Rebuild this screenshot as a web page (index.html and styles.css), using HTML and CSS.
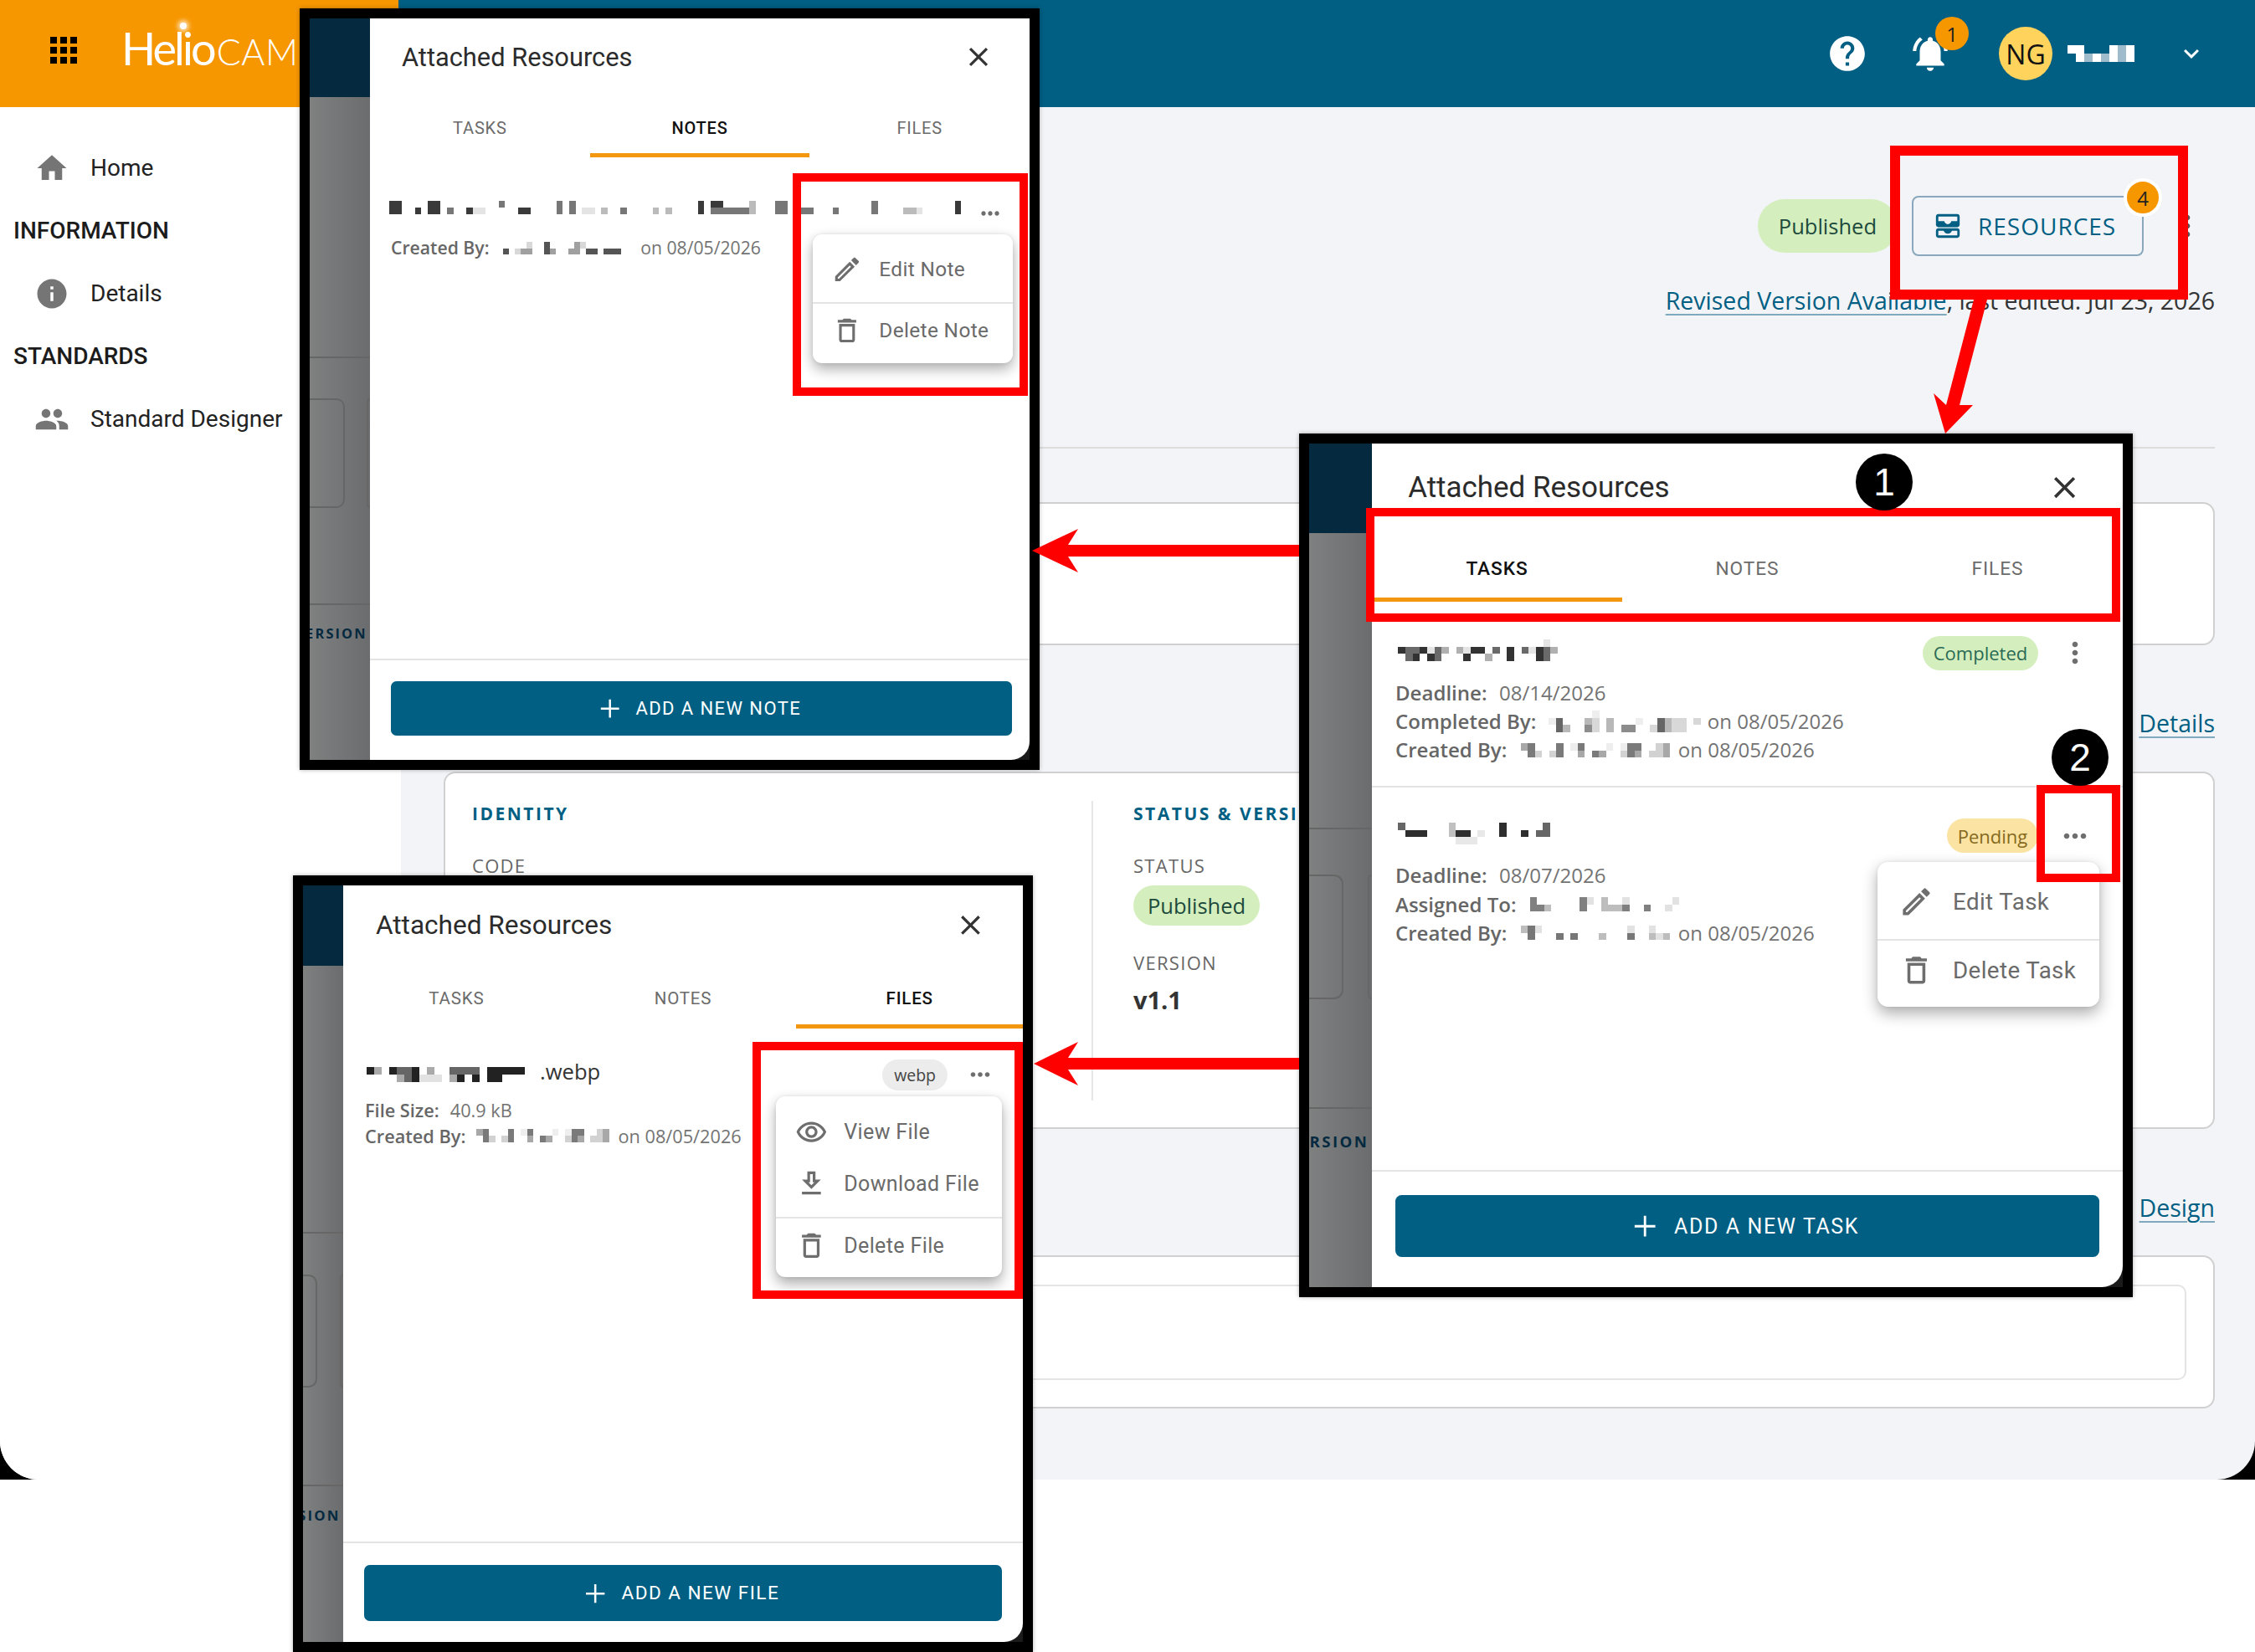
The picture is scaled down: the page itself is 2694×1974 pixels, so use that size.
FILE: index.html
```html
<!DOCTYPE html>
<html>
<head>
  <meta charset="UTF-8">
  <title>HelioCAM resources</title>
  <link rel="stylesheet" href="styles.css">
</head>
<body>

<!-- icons and mosaic blocks, used further down -->
<svg class="defs" width="0" height="0">
  <symbol id="i-apps" viewBox="0 0 24 24"><path d="M4 8h4V4H4v4zm6 12h4v-4h-4v4zm-6 0h4v-4H4v4zm0-6h4v-4H4v4zm6 0h4v-4h-4v4zm6-10v4h4V4h-4zm-6 4h4V4h-4v4zm6 6h4v-4h-4v4zm0 6h4v-4h-4v4z"/></symbol>
  <symbol id="i-home" viewBox="0 0 24 24"><path d="M10 20v-6h4v6h5v-8h3L12 3 2 12h3v8z"/></symbol>
  <symbol id="i-info" viewBox="0 0 24 24"><path d="M12 2C6.48 2 2 6.48 2 12s4.48 10 10 10 10-4.48 10-10S17.52 2 12 2zm1 15h-2v-6h2v6zm0-8h-2V7h2v2z"/></symbol>
  <symbol id="i-people" viewBox="0 0 24 24"><path d="M16 11c1.66 0 2.99-1.34 2.99-3S17.66 5 16 5c-1.66 0-3 1.34-3 3s1.34 3 3 3zm-8 0c1.66 0 2.99-1.34 2.99-3S9.66 5 8 5C6.34 5 5 6.34 5 8s1.34 3 3 3zm0 2c-2.33 0-7 1.17-7 3.5V19h14v-2.5c0-2.33-4.67-3.5-7-3.5zm8 0c-.29 0-.62.02-.97.05 1.16.84 1.97 1.97 1.97 3.45V19h6v-2.5c0-2.33-4.67-3.5-7-3.5z"/></symbol>
  <symbol id="i-help" viewBox="0 0 24 24"><path d="M12 2C6.48 2 2 6.48 2 12s4.48 10 10 10 10-4.48 10-10S17.52 2 12 2zm1 17h-2v-2h2v2zm2.07-7.75l-.9.92C13.45 12.9 13 13.5 13 15h-2v-.5c0-1.1.45-2.1 1.17-2.83l1.24-1.26c.37-.36.59-.86.59-1.41 0-1.1-.9-2-2-2s-2 .9-2 2H8c0-2.21 1.79-4 4-4s4 1.79 4 4c0 .88-.36 1.68-.93 2.25z"/></symbol>
  <symbol id="i-bell" viewBox="0 0 24 24"><path d="M7.58 4.08L6.15 2.65C3.75 4.48 2.17 7.3 2.03 10.5h2c.15-2.65 1.51-4.97 3.55-6.42zm12.39 6.42h2c-.15-3.2-1.73-6.02-4.12-7.85l-1.42 1.43c2.02 1.45 3.39 3.77 3.54 6.42zM18 11c0-3.07-1.64-5.64-4.5-6.32V4c0-.83-.67-1.5-1.5-1.5s-1.5.67-1.5 1.5v.68C7.63 5.36 6 7.92 6 11v5l-2 2v1h16v-1l-2-2v-5zm-6 11c.14 0 .27-.01.4-.04.65-.14 1.18-.58 1.44-1.18.1-.24.15-.5.15-.78h-4c.01 1.1.9 2 2.01 2z"/></symbol>
  <symbol id="i-chevron" viewBox="0 0 24 24"><path d="M16.59 8.59L12 13.17 7.41 8.59 6 10l6 6 6-6z"/></symbol>
  <symbol id="i-close" viewBox="0 0 24 24"><path d="M19 6.41L17.59 5 12 10.59 6.41 5 5 6.41 10.59 12 5 17.59 6.41 19 12 13.41 17.59 19 19 17.59 13.41 12z"/></symbol>
  <symbol id="i-edit" viewBox="0 0 24 24"><path d="M3 17.25V21h3.75L17.81 9.94l-3.75-3.75L3 17.25zM5.92 19H5v-.92l9.06-9.06.92.92L5.92 19zM20.71 5.63l-2.34-2.34c-.39-.39-1.02-.39-1.41 0l-1.83 1.83 3.75 3.75 1.83-1.83c.39-.39.39-1.02 0-1.41z"/></symbol>
  <symbol id="i-delete" viewBox="0 0 24 24"><path d="M6 19c0 1.1.9 2 2 2h8c1.1 0 2-.9 2-2V7H6v12zM8 9h8v10H8V9zm7.5-5l-1-1h-5l-1 1H5v2h14V4h-3.5z"/></symbol>
  <symbol id="i-eye" viewBox="0 0 24 24"><path d="M12 6c3.79 0 7.17 2.13 8.82 5.5C19.17 14.87 15.79 17 12 17s-7.17-2.13-8.82-5.5C4.83 8.13 8.21 6 12 6m0-2C7 4 2.73 7.11 1 11.5 2.73 15.89 7 19 12 19s9.27-3.11 11-7.5C21.27 7.11 17 4 12 4zm0 5c1.38 0 2.5 1.12 2.5 2.5S13.38 14 12 14s-2.5-1.12-2.5-2.5S10.62 9 12 9m0-2c-2.48 0-4.5 2.02-4.5 4.5S9.52 16 12 16s4.5-2.02 4.5-4.5S14.48 7 12 7z"/></symbol>
  <symbol id="i-download" viewBox="0 0 24 24"><path d="M19 9h-4V3H9v6H5l7 7 7-7zm-8 2V5h2v6h1.17L12 13.17 9.83 11H11zm-6 7h14v2H5z"/></symbol>
  <symbol id="i-dots" viewBox="0 0 24 24"><path d="M6 10c-1.1 0-2 .9-2 2s.9 2 2 2 2-.9 2-2-.9-2-2-2zm12 0c-1.1 0-2 .9-2 2s.9 2 2 2 2-.9 2-2-.9-2-2-2zm-6 0c-1.1 0-2 .9-2 2s.9 2 2 2 2-.9 2-2-.9-2-2-2z"/></symbol>
  <symbol id="i-kebab" viewBox="0 0 24 24"><path d="M12 8c1.1 0 2-.9 2-2s-.9-2-2-2-2 .9-2 2 .9 2 2 2zm0 2c-1.1 0-2 .9-2 2s.9 2 2 2 2-.9 2-2-.9-2-2-2zm0 6c-1.1 0-2 .9-2 2s.9 2 2 2 2-.9 2-2-.9-2-2-2z"/></symbol>
  <symbol id="i-add" viewBox="0 0 24 24"><path d="M19 12.8h-6.2V19h-1.6v-6.200H5v-1.600h6.200V5h1.600v6.200H19z"/></symbol>
  <symbol id="i-inbox" viewBox="0 0 24 24"><path fill-rule="evenodd" d="M4 2h16c1.100 0 2 .9 2 2v7c0 1.100-.9 2-2 2H4c-1.100 0-2-.9-2-2V4c0-1.100.9-2 2-2zm0 2v4h5c.4 1.500 1.500 2.500 3 2.500s2.600-1 3-2.500h5V4H4zM4 14h16c1.100 0 2 .9 2 2v4c0 1.100-.9 2-2 2H4c-1.100 0-2-.9-2-2v-4c0-1.100.9-2 2-2zm0 2v4h16v-4h-4.500c-.4 1.300-1.900 2.500-3.500 2.500S8.900 17.300 8.500 16H4z"/></symbol>

  <!-- mosaic blocks over the names, 1 unit = 1 cell -->
  <symbol id="m-task1" viewBox="0 0 22 3">
    <path fill="#333" d="M0 1h1v1H0zM3 1h1v1H3zM10 1h2v1h-2zM15 1h1v2h-1zM19 1h1v2h-1zM2 2h1v1H2zM4 2h1v1H4zM9 2h1v1H9z"/>
    <path fill="#6a6a6a" d="M1 1h2v1H1zM5 1h1v2H5zM13 1h1v1h-1zM17 1h1v1h-1zM20 1h1v2h-1zM1 2h1v1H1z"/>
    <path fill="#b0b0b0" d="M6 1h1v1H6zM8 1h1v1H8zM12 2h1v1h-1zM21 1h1v1h-1z"/>
    <path fill="#e4e4e4" d="M4 1h1v1H4zM9 1h1v1H9zM18 1h1v1h-1zM20 0h1v1h-1z"/>
  </symbol>
  <symbol id="m-completed" viewBox="0 0 21 3">
    <path fill="#666" d="M1 1h1v2H1zM15 1h1v2h-1z"/>
    <path fill="#8c8c8c" d="M5 2h1v1H5zM10 2h2v1h-2z"/>
    <path fill="#b8b8b8" d="M5 1h1v1H5zM2 2h1v1H2zM8 1h1v2H8zM16 1h1v2h-1z"/>
    <path fill="#d8d8d8" d="M6 1h1v2H6zM14 2h1v1h-1zM17 1h2v2h-2zM20 1h1v1h-1z"/>
    <path fill="#eee" d="M0 1h1v1H0zM12 1h1v1h-1zM6 0h1v1H6z"/>
  </symbol>
  <symbol id="m-created" viewBox="0 0 21 2">
    <path fill="#7a7a7a" d="M1 0h1v2H1zM5 0h1v2H5zM8 0h1v1H8zM10 1h1v1h-1zM15 0h2v1h-2zM15 1h1v1h-1z"/>
    <path fill="#a8a8a8" d="M8 1h1v1H8zM0 0h1v1H0zM11 1h1v1h-1zM16 1h1v1h-1zM20 0h1v2h-1z"/>
    <path fill="#d2d2d2" d="M2 1h1v1H2zM4 1h1v1H4zM14 1h1v1h-1zM18 1h2v1h-2zM19 0h1v1h-1z"/>
    <path fill="#eee" d="M7 0h1v1H7zM14 0h1v1h-1zM12 0h1v1h-1z"/>
  </symbol>
  <symbol id="m-task2" viewBox="0 0 21 3">
    <path fill="#2e2e2e" d="M1 1h3v1H1zM8 1h2v1H8zM14 0h1v2h-1zM17 1h1v1h-1z"/>
    <path fill="#666" d="M0 0h1v1H0zM20 0h1v2h-1zM19 1h1v1h-1z"/>
    <path fill="#c0c0c0" d="M7 0h1v1H7zM7 1h1v1H7z"/>
    <path fill="#e8e8e8" d="M10 2h1v1h-1zM8 2h2v1H8zM11 1h1v1h-1z"/>
  </symbol>
  <symbol id="m-assigned" viewBox="0 0 21 2">
    <path fill="#808080" d="M0 0h1v2H0zM1 1h2v1H1zM7 0h1v2H7zM13 1h1v1h-1zM16 1h1v1h-1z"/>
    <path fill="#bdbdbd" d="M2 1h1v1H2zM10 0h1v2h-1zM11 1h2v1h-2z"/>
    <path fill="#e2e2e2" d="M8 0h1v1H8zM20 0h1v1h-1zM19 1h1v1h-1zM13 0h1v1h-1z"/>
  </symbol>
  <symbol id="m-created2" viewBox="0 0 21 2">
    <path fill="#777" d="M1 0h1v2H1zM5 1h1v1H5zM7 1h1v1H7zM15 1h1v1h-1z"/>
    <path fill="#bdbdbd" d="M0 0h1v1H0zM11 1h1v1h-1zM18 1h1v1h-1zM20 1h1v1h-1z"/>
    <path fill="#e2e2e2" d="M2 0h1v1H2zM15 0h1v1h-1zM19 1h1v1h-1zM18 0h1v1h-1z"/>
  </symbol>
  <symbol id="m-note" viewBox="0 0 90 3">
    <path fill="#3a3a3a" d="M0 0h2v2H0zM4 1h1v1H4zM6 0h2v2H6zM12 1h1v1h-1zM20 1h2v1h-2zM48 0h1v2h-1zM50 0h2v1h-2zM88 0h1v2h-1z"/>
    <path fill="#777" d="M9 1h1v1H9zM17 0h1v1h-1zM26 0h1v2h-1zM28 0h1v2h-1zM36 1h1v1h-1zM50 1h3v1h-3zM53 1h3v1h-3zM60 0h2v2h-2zM64 1h2v1h-2zM69 1h1v1h-1zM75 0h1v2h-1z"/>
    <path fill="#bbb" d="M33 1h1v1h-1zM41 1h1v1h-1zM43 1h1v1h-1zM56 0h1v2h-1zM80 1h2v1h-2z"/>
    <path fill="#e4e4e4" d="M13 1h2v1h-2zM30 1h2v1h-2zM82 1h1v1h-1z"/>
  </symbol>
  <symbol id="m-note-by" viewBox="0 0 21 2">
    <path fill="#555" d="M0 1h1v1H0zM7 0h1v2H7zM14 1h2v1h-2zM17 1h3v1h-3z"/>
    <path fill="#a0a0a0" d="M3 1h2v1H3zM8 1h1v1H8zM11 1h2v1h-2zM12 0h1v1h-1z"/>
    <path fill="#d8d8d8" d="M4 0h1v1H4zM2 1h1v1H2zM13 0h1v1h-1z"/>
  </symbol>
  <symbol id="m-file" viewBox="0 0 23 2">
    <path fill="#222" d="M0 0h1v1H0zM3 0h1v1H3zM6 0h1v2H6zM12 1h1v1h-1zM14 1h1v1h-1zM16 0h5v1h-5zM16 1h2v1h-2z"/>
    <path fill="#666" d="M4 0h2v1H4zM5 1h1v1H5zM11 0h2v1h-2zM13 0h2v1h-2z"/>
    <path fill="#aaa" d="M1 0h1v1H1zM4 1h1v1H4zM8 0h1v1H8zM11 1h1v1h-1z"/>
    <path fill="#e2e2e2" d="M7 1h2v1H7zM9 1h1v1H9z"/>
  </symbol>
  <symbol id="m-user" viewBox="0 0 8 2">
    <path fill="#fff" d="M0 0h2v1H0zM1 1h1v1H1zM3 1h1v1H3zM5 0h1v2H5zM7 0h1v2H7z"/>
    <path fill="#9fbccd" d="M2 1h1v1H2zM6 1h1v1H6zM4 1h1v1H4zM6 0h1v1H6z"/>
  </symbol>
</svg>

<div class="screen">
  <div class="app">
    <header class="topbar">
      <div class="brand">
        <svg class="ico brand-apps"><use href="#i-apps"/></svg>
        <span class="logo"><span class="logo-main">Helio</span><span class="logo-sub">CAM</span></span>
      </div>
      <div class="top-right">
        <svg class="ico top-help"><use href="#i-help"/></svg>
        <div class="top-bell">
          <svg class="ico top-bell-ico"><use href="#i-bell"/></svg>
          <span class="bell-count">1</span>
        </div>
        <span class="avatar">NG</span>
        <svg class="top-user"><use href="#m-user"/></svg>
        <svg class="ico top-chevron"><use href="#i-chevron"/></svg>
      </div>
    </header>

    <div class="content">
      <nav class="sidebar">
        <a class="nav-item"><svg class="ico nav-ico"><use href="#i-home"/></svg>Home</a>
        <div class="nav-head">INFORMATION</div>
        <a class="nav-item"><svg class="ico nav-ico"><use href="#i-info"/></svg>Details</a>
        <div class="nav-head">STANDARDS</div>
        <a class="nav-item"><svg class="ico nav-ico"><use href="#i-people"/></svg>Standard Designer</a>
      </nav>

      <main class="main">
        <div class="actions">
          <span class="status-pill">Published</span>
          <button class="res-btn">
            <svg class="ico res-ico"><use href="#i-inbox"/></svg>RESOURCES
            <span class="res-count">4</span>
          </button>
          <svg class="ico act-kebab"><use href="#i-kebab"/></svg>
        </div>
        <div class="edited"><a class="link">Revised Version Available</a>, last edited: Jul 23, 2026</div>
        <hr class="rule">

        <section class="card card-a"></section>
        <div class="card-link"><a class="link">Details</a></div>

        <section class="card card-b">
          <div class="col col-id">
            <h3 class="sec-title">IDENTITY</h3>
            <div class="field">CODE</div>
          </div>
          <div class="col col-status">
            <h3 class="sec-title">STATUS &amp; VERSION</h3>
            <div class="field">STATUS</div>
            <span class="status-pill status-small">Published</span>
            <div class="field field-gap">VERSION</div>
            <div class="field-val">v1.1</div>
          </div>
        </section>
        <div class="card-link card-link-b"><a class="link">Design</a></div>

        <section class="card card-c"><div class="inner-box"></div></section>
      </main>
    </div>
  </div>
</div>

<!-- screenshot of the notes tab -->
<div class="panel panel-notes">
  <div class="strip">
    <div class="strip-top"></div>
    <div class="strip-line"></div>
    <div class="strip-boxes"><i></i><i></i></div>
    <div class="strip-line strip-line-b"></div>
    <div class="strip-text">VERSION</div>
  </div>
  <div class="drawer">
    <div class="dr-head">
      <h2 class="dr-title">Attached Resources</h2>
      <svg class="ico dr-close"><use href="#i-close"/></svg>
    </div>
    <div class="tabs">
      <span class="tab">TASKS</span>
      <span class="tab tab-on">NOTES</span>
      <span class="tab">FILES</span>
    </div>
    <div class="list note-item">
      <div class="note-line">
        <svg class="m-note"><use href="#m-note"/></svg>
        <svg class="ico note-dots"><use href="#i-dots"/></svg>
      </div>
      <div class="meta note-by"><span class="lbl">Created By:</span><svg class="m-name-n"><use href="#m-note-by"/></svg><span>on 08/05/2026</span></div>
    </div>
    <div class="menu menu-notes">
      <div class="menu-group">
        <div class="menu-row"><svg class="ico menu-ico"><use href="#i-edit"/></svg>Edit Note</div>
      </div>
      <div class="menu-group menu-last">
        <div class="menu-row"><svg class="ico menu-ico"><use href="#i-delete"/></svg>Delete Note</div>
      </div>
    </div>
    <div class="dr-foot">
      <button class="add-btn"><svg class="ico add-ico"><use href="#i-add"/></svg>ADD A NEW NOTE</button>
    </div>
  </div>
</div>

<!-- screenshot of the tasks tab -->
<div class="panel panel-tasks">
  <div class="strip">
    <div class="strip-top"></div>
    <div class="strip-line"></div>
    <div class="strip-boxes"><i></i><i></i></div>
    <div class="strip-line strip-line-b"></div>
    <div class="strip-text">VERSION</div>
  </div>
  <div class="drawer">
    <div class="dr-head">
      <h2 class="dr-title">Attached Resources</h2>
      <svg class="ico dr-close"><use href="#i-close"/></svg>
    </div>
    <div class="tabs">
      <span class="tab tab-on">TASKS</span>
      <span class="tab">NOTES</span>
      <span class="tab">FILES</span>
    </div>
    <div class="list">
      <div class="task task-first">
        <div class="task-head">
          <svg class="m-task"><use href="#m-task1"/></svg>
          <span class="tag tag-done">Completed</span>
          <svg class="ico task-more"><use href="#i-kebab"/></svg>
        </div>
        <div class="meta"><span class="lbl">Deadline:</span><span>08/14/2026</span></div>
        <div class="meta"><span class="lbl">Completed By:</span><svg class="m-name"><use href="#m-completed"/></svg><span>on 08/05/2026</span></div>
        <div class="meta"><span class="lbl">Created By:</span><svg class="m-name m-name-2"><use href="#m-created"/></svg><span>on 08/05/2026</span></div>
      </div>
      <div class="task">
        <div class="task-head">
          <svg class="m-task m-task-b"><use href="#m-task2"/></svg>
          <span class="tag tag-pending">Pending</span>
          <svg class="ico task-more"><use href="#i-dots"/></svg>
        </div>
        <div class="meta"><span class="lbl">Deadline:</span><span>08/07/2026</span></div>
        <div class="meta"><span class="lbl">Assigned To:</span><svg class="m-name m-name-2"><use href="#m-assigned"/></svg></div>
        <div class="meta"><span class="lbl">Created By:</span><svg class="m-name m-name-2"><use href="#m-created2"/></svg><span>on 08/05/2026</span></div>
      </div>
    </div>
    <div class="menu menu-tasks">
      <div class="menu-group">
        <div class="menu-row"><svg class="ico menu-ico"><use href="#i-edit"/></svg>Edit Task</div>
      </div>
      <div class="menu-group menu-last">
        <div class="menu-row"><svg class="ico menu-ico"><use href="#i-delete"/></svg>Delete Task</div>
      </div>
    </div>
    <div class="dr-foot">
      <button class="add-btn"><svg class="ico add-ico"><use href="#i-add"/></svg>ADD A NEW TASK</button>
    </div>
  </div>
</div>

<!-- screenshot of the files tab -->
<div class="panel panel-files">
  <div class="strip">
    <div class="strip-top"></div>
    <div class="strip-line"></div>
    <div class="strip-boxes"><i></i><i></i></div>
    <div class="strip-line strip-line-b"></div>
    <div class="strip-text">VERSION</div>
  </div>
  <div class="drawer">
    <div class="dr-head">
      <h2 class="dr-title">Attached Resources</h2>
      <svg class="ico dr-close"><use href="#i-close"/></svg>
    </div>
    <div class="tabs">
      <span class="tab">TASKS</span>
      <span class="tab">NOTES</span>
      <span class="tab tab-on">FILES</span>
    </div>
    <div class="list file-item">
      <div class="file-head">
        <svg class="m-file"><use href="#m-file"/></svg><span class="file-ext">.webp</span>
        <span class="tag tag-type">webp</span>
        <svg class="ico task-more"><use href="#i-dots"/></svg>
      </div>
      <div class="meta"><span class="lbl">File Size:</span><span>40.9 kB</span></div>
      <div class="meta"><span class="lbl">Created By:</span><svg class="m-name-f"><use href="#m-created"/></svg><span>on 08/05/2026</span></div>
    </div>
    <div class="menu menu-files">
      <div class="menu-group">
        <div class="menu-row"><svg class="ico menu-ico"><use href="#i-eye"/></svg>View File</div>
        <div class="menu-row"><svg class="ico menu-ico"><use href="#i-download"/></svg>Download File</div>
      </div>
      <div class="menu-group menu-last">
        <div class="menu-row"><svg class="ico menu-ico"><use href="#i-delete"/></svg>Delete File</div>
      </div>
    </div>
    <div class="dr-foot">
      <button class="add-btn"><svg class="ico add-ico"><use href="#i-add"/></svg>ADD A NEW FILE</button>
    </div>
  </div>
</div>

<!-- red callouts drawn over everything -->
<svg class="arrows" width="2694" height="1974" viewBox="0 0 2694 1974">
  <polygon points="2358,358 2374,358 2341,484 2357,484 2324,518 2310,470 2325,484"/>
  <polygon points="1552,651 1276,651 1288,632 1233,658 1288,684 1276,665 1552,665"/>
  <polygon points="1552,1264 1276,1264 1288,1245 1235,1271 1288,1297 1276,1278 1552,1278"/>
</svg>
<div class="mark mark-res"></div>
<div class="mark mark-note"></div>
<div class="mark mark-tabs"></div>
<div class="mark mark-dots"></div>
<div class="mark mark-file"></div>
<div class="step step-1">1</div>
<div class="step step-2">2</div>

</body>
</html>
```

FILE: styles.css
```css
* {
  box-sizing: border-box;
}

body {
  margin: 0;
  width: 2694px;
  height: 1974px;
  position: relative;
  overflow: hidden;
  background: #fff;
  color: #333;
  font-family: "Open Sans", sans-serif;
}

h2, h3 {
  margin: 0;
  font-weight: inherit;
}

.defs {
  position: absolute;
}

.ico {
  display: block;
  flex: none;
  fill: currentColor;
}

/* base page */
.screen {
  height: 1768px;
  background: #000;
}

.app {
  height: 100%;
  display: flex;
  flex-direction: column;
  overflow: hidden;
  border-radius: 0 0 46px 46px;
  background: #f2f4f7;
}

.topbar {
  height: 128px;
  flex: none;
  display: flex;
  justify-content: space-between;
  background: #005f83;
}

.brand {
  width: 476px;
  display: flex;
  align-items: center;
  background: #f79700;
  padding: 0 0 8px 52px;
}

.brand-apps {
  width: 48px;
  height: 48px;
  color: #000;
}

.logo {
  margin: -6px 0 0 45px;
  color: #fff;
  font-family: Lato, sans-serif;
  white-space: nowrap;
  display: flex;
  align-items: baseline;
}

.logo-main {
  position: relative;
  font-size: 54px;
  letter-spacing: -2.9px;
}

/* little sun on the i */
.logo-main::after {
  content: "";
  position: absolute;
  left: 70px;
  top: 2px;
  width: 8px;
  height: 8px;
  border-radius: 50%;
  background: #fff;
  box-shadow: 0 0 5px 3px rgba(255, 255, 255, .65);
}

.logo-sub {
  font-size: 43px;
  font-weight: 300;
  letter-spacing: .5px;
  margin-left: 3px;
}

.top-right {
  display: flex;
  align-items: center;
  padding-right: 58px;
  color: #fff;
}

.top-help {
  width: 50px;
  height: 50px;
}

.top-bell {
  position: relative;
  margin-left: 49px;
}

.top-bell-ico {
  width: 50px;
  height: 50px;
}

.bell-count {
  position: absolute;
  left: 31px;
  top: -19px;
  width: 40px;
  height: 40px;
  border-radius: 50%;
  background: #f79700;
  color: #222;
  font-size: 24px;
  display: flex;
  align-items: center;
  justify-content: center;
}

.avatar {
  margin-left: 57px;
  width: 64px;
  height: 64px;
  border-radius: 50%;
  background: #ffd35c;
  color: #111;
  font-size: 32px;
  display: flex;
  align-items: center;
  justify-content: center;
}

.top-user {
  margin-left: 18px;
  width: 80px;
  height: 20px;
}

.top-chevron {
  margin-left: 50px;
  width: 36px;
  height: 36px;
}

.content {
  flex: 1;
  display: flex;
  min-height: 0;
}

.sidebar {
  width: 479px;
  flex: none;
  background: #fff;
  padding-top: 35px;
  font-family: Roboto, sans-serif;
  font-size: 28px;
  color: #222;
}

.nav-item {
  height: 75px;
  display: flex;
  align-items: center;
  padding-left: 41px;
}

.nav-ico {
  width: 42px;
  height: 42px;
  margin-right: 25px;
  color: #757575;
}

.nav-head {
  height: 75px;
  display: flex;
  align-items: center;
  padding-left: 16px;
  font-weight: 500;
  color: #1c1c1c;
}

.main {
  flex: 1;
  padding: 106px 48px 0 51px;
  font-size: 28.5px;
}

.actions {
  display: flex;
  justify-content: flex-end;
  align-items: center;
}

.status-pill {
  height: 64px;
  padding: 0 25px;
  display: flex;
  align-items: center;
  border-radius: 32px;
  background: #d4efbd;
  color: #1d4a3c;
  font-size: 25.5px;
}

.res-btn {
  position: relative;
  margin-left: 17px;
  width: 277px;
  height: 72px;
  padding: 0 0 0 24px;
  display: flex;
  align-items: center;
  background: transparent;
  border: 2px solid #8aa8bd;
  border-radius: 8px;
  color: #005f83;
  font-family: "Open Sans", sans-serif;
  font-size: 28px;
  letter-spacing: 1px;
}

.res-ico {
  width: 34px;
  height: 34px;
  margin-right: 19px;
}

.res-count {
  position: absolute;
  right: -24px;
  top: -23px;
  width: 46px;
  height: 46px;
  border: 4px solid #fff;
  border-radius: 50%;
  background: #f79700;
  color: #222;
  font-size: 24px;
  letter-spacing: 0;
  display: flex;
  align-items: center;
  justify-content: center;
}

.act-kebab {
  margin-left: 32px;
  margin-right: 13px;
  width: 40px;
  height: 40px;
  color: #555;
}

.edited {
  margin-top: 36px;
  line-height: 34px;
  text-align: right;
}

.link {
  color: #005f83;
  text-decoration: underline;
  text-underline-offset: 5px;
  text-decoration-thickness: 2px;
  text-decoration-color: #7fa9bf;
}

.rule {
  margin: 158px 0 0;
  border: 0;
  border-top: 2px solid #dcdcdc;
}

.card {
  border: 2px solid #d0d0d0;
  border-radius: 14px;
  background: #fff;
}

.card-a {
  margin-top: 64px;
  height: 171px;
}

.card-link {
  margin-top: 75px;
  line-height: 36px;
  text-align: right;
}

.card-link-b {
  margin-top: 76px;
}

.card-b {
  margin-top: 40px;
  height: 427px;
  padding: 33px 32px 32px;
  display: flex;
}

.col-id {
  width: 742px;
  border-right: 2px solid #e6e6e6;
}

.col-status {
  padding-left: 48px;
}

.sec-title {
  line-height: 30px;
  color: #005f83;
  font-size: 21px;
  font-weight: 700;
  letter-spacing: 2.5px;
  white-space: nowrap;
}

.field {
  margin-top: 32px;
  line-height: 30px;
  color: #666;
  font-size: 22px;
  letter-spacing: 1.3px;
}

.field-gap {
  margin-top: 29px;
}

.status-small {
  display: inline-flex;
  margin-top: 9px;
  height: 48px;
  padding: 0 17px;
  border-radius: 24px;
}

.field-val {
  margin-top: 10px;
  line-height: 40px;
  font-size: 29px;
  font-weight: 700;
  color: #333;
}

.card-c {
  margin-top: 39px;
  height: 183px;
  padding: 33px 32px 32px;
}

.inner-box {
  height: 100%;
  border: 2px solid #e4e4e4;
  border-radius: 10px;
}

/* the three drawer screenshots, placed freely on the page. 1em = the zoom of that shot */
.panel {
  position: absolute;
  display: flex;
  border: 12px solid #000;
  background: #1b1b1b;
  box-shadow: 0 0 5px rgba(0, 0, 0, .3);
  overflow: hidden;
}

.panel-notes {
  left: 358px;
  top: 10px;
  width: 884px;
  height: 910px;
  font-size: 20px;
}

.panel-tasks {
  left: 1552px;
  top: 518px;
  width: 996px;
  height: 1032px;
  font-size: 22.7px;
}

.panel-files {
  left: 350px;
  top: 1046px;
  width: 884px;
  height: 928px;
  font-size: 20.5px;
}

.strip {
  flex: none;
  width: 3.6em;
  background: linear-gradient(to right, #7f8080, #6a6c6e);
  overflow: hidden;
}

.panel-tasks .strip {
  width: 75px;
}

.panel-files .strip {
  width: 48px;
}

.strip-top {
  height: 4.7em;
  background: #052a3f;
}

.strip-line {
  margin-top: 15.5em;
  border-top: 2px solid #666;
}

.strip-boxes {
  margin-top: 2.4em;
  height: 6.55em;
  display: flex;
  justify-content: flex-end;
  gap: 1.3em;
}

.strip-boxes i {
  flex: none;
  width: 4em;
  border: 2px solid #666;
  border-radius: .5em;
}

.strip-boxes i + i {
  width: .2em;
  border-right: 0;
  border-radius: .5em 0 0 .5em;
}

.strip-line-b {
  margin-top: 5.7em;
}

.strip-text {
  margin-top: 1.3em;
  display: flex;
  justify-content: flex-end;
  padding-right: .2em;
  line-height: 1.6em;
  color: #052a3f;
  font-size: .82em;
  font-weight: 700;
  letter-spacing: .13em;
  white-space: nowrap;
}

.drawer {
  flex: 1;
  position: relative;
  display: flex;
  flex-direction: column;
  min-width: 0;
  background: #fff;
  border-radius: 0 0 1.1em 0;
}

.dr-head {
  height: 4.82em;
  padding: 0 2.1em .22em 1.9em;
  display: flex;
  align-items: center;
  justify-content: space-between;
}

.dr-title {
  font-family: Roboto, sans-serif;
  font-size: 1.54em;
  color: #2b2b2b;
}

.dr-close {
  width: 1.9em;
  height: 1.9em;
  color: #333;
}

.tabs {
  height: 3.5em;
  flex: none;
  display: flex;
}

.tab {
  flex: 1;
  display: flex;
  align-items: center;
  justify-content: center;
  padding-top: .25em;
  border-bottom: .25em solid transparent;
  color: #6b6b6b;
  font-family: Roboto, sans-serif;
  letter-spacing: .04em;
}

.tab-on {
  color: #111;
  font-weight: 500;
  border-bottom-color: #f2970f;
}

.list {
  flex: 1;
  min-height: 0;
}

.meta {
  display: flex;
  align-items: center;
  line-height: 34.2px;
  color: #737373;
  font-size: 1.06em;
  white-space: nowrap;
}

.lbl {
  margin-right: .6em;
  color: #666;
  font-weight: 600;
}

.tag {
  height: 41px;
  padding: 0 .58em;
  display: flex;
  align-items: center;
  border-radius: 1em;
  font-size: .97em;
  white-space: nowrap;
}

.tag-done {
  margin-left: auto;
  background: #d4efbd;
  color: #2a6a55;
}

.tag-pending {
  margin-left: auto;
  background: #fbe3a3;
  color: #85691d;
}

.tag-type {
  margin-left: auto;
  height: 37px;
  padding: 0 .72em;
  background: #ececec;
  color: #444;
  font-size: .95em;
}

/* tasks */
.task {
  padding: 37px 37px 0 28px;
}

.task-first {
  padding-top: 41px;
  padding-bottom: 26px;
  border-bottom: 2px solid #e4e4e4;
}

.task-head {
  height: 41px;
  margin-bottom: 10px;
  display: flex;
  align-items: center;
}

.task-more {
  margin-left: 24px;
  width: 40px;
  height: 40px;
  color: #6e6e6e;
  flex: none;
}

.m-task {
  margin: -6px 0 0 3px;
  width: 191px;
  height: 26px;
  shape-rendering: crispEdges;
}

.m-task-b {
  width: 182px;
}

.m-name {
  width: 182px;
  height: 26px;
  margin-right: 8px;
  shape-rendering: crispEdges;
}

.m-name-2 {
  height: 17px;
}

/* notes */
.note-item {
  padding: 52px 0 0 23px;
}

.note-line {
  height: 24px;
  display: flex;
  align-items: center;
}

.m-note {
  width: 691px;
  height: 24px;
  shape-rendering: crispEdges;
}

.note-dots {
  margin: 6px 0 0 11px;
  width: 32px;
  height: 32px;
  color: #6e6e6e;
}

.note-by {
  margin: 15px 0 0 2px;
}

.m-name-n {
  width: 148px;
  height: 15px;
  margin: 0 16px 0 4px;
  shape-rendering: crispEdges;
}

/* files */
.file-item {
  padding: 37px 34px 0 26px;
}

.file-head {
  height: 37px;
  margin-bottom: 8px;
  display: flex;
  align-items: center;
}

.m-file {
  margin-left: 2px;
  width: 207px;
  height: 18px;
  shape-rendering: crispEdges;
}

.file-ext {
  margin-top: -8px;
  font-size: 1.25em;
  color: #333;
}

.file-item .meta {
  line-height: 31px;
}

.file-item .task-more {
  margin-left: 22px;
  width: 34px;
  height: 34px;
}

.m-name-f {
  width: 159px;
  height: 16px;
  margin-right: 10px;
  shape-rendering: crispEdges;
}

/* open menus sit over the list */
.menu {
  position: absolute;
  background: #fff;
  border-radius: .55em;
  box-shadow: 0 .35em .8em rgba(0, 0, 0, .32), 0 0 .2em rgba(0, 0, 0, .08);
  color: #6a6a6a;
  font-family: Roboto, sans-serif;
}

.menu-notes {
  left: 529px;
  top: 258px;
  width: 239px;
  height: 154px;
}

.menu-tasks {
  left: 604px;
  top: 500px;
  width: 265px;
  height: 173px;
}

.menu-files {
  left: 517px;
  top: 252px;
  width: 270px;
  height: 216px;
}

.menu-group {
  padding: .6em 0 .45em;
  border-bottom: 2px solid #e4e4e4;
}

.menu-last {
  padding-top: .1em;
  border-bottom: 0;
}

.menu-row {
  height: 2.45em;
  padding-left: .92em;
  display: flex;
  align-items: center;
  font-size: 1.22em;
  letter-spacing: .015em;
}

.menu-ico {
  width: 1.55em;
  height: 1.55em;
  margin-right: .78em;
  color: #6e6e6e;
}

.dr-foot {
  flex: none;
  border-top: 2px solid #e4e4e4;
}

.panel-notes .dr-foot {
  padding: 25px 21px 29px 25px;
}

.panel-tasks .dr-foot {
  padding: 28px 28px 36px;
}

.panel-files .dr-foot {
  padding: 26px 25px 25px;
}

.add-btn {
  width: 100%;
  height: 2.95em;
  padding: 0 .4em 0 0;
  display: flex;
  align-items: center;
  justify-content: center;
  border: 0;
  border-radius: .3em;
  background: #005f83;
  color: #fff;
  font-family: Roboto, sans-serif;
  font-size: 1.1em;
  letter-spacing: .065em;
}

.add-ico {
  width: 1.7em;
  height: 1.7em;
  margin-right: .55em;
}

/* annotations */
.arrows {
  position: absolute;
  left: 0;
  top: 0;
  fill: #f00;
  pointer-events: none;
}

.mark {
  position: absolute;
  border: 10px solid #f00;
}

.mark-res {
  left: 2258px;
  top: 174px;
  width: 356px;
  height: 184px;
  border-width: 12px;
}

.mark-note {
  left: 947px;
  top: 207px;
  width: 281px;
  height: 266px;
}

.mark-tabs {
  left: 1632px;
  top: 607px;
  width: 901px;
  height: 136px;
}

.mark-dots {
  left: 2433px;
  top: 938px;
  width: 100px;
  height: 116px;
}

.mark-file {
  left: 899px;
  top: 1245px;
  width: 323px;
  height: 307px;
}

.step {
  position: absolute;
  width: 68px;
  height: 68px;
  border-radius: 50%;
  background: #000;
  color: #fff;
  font-family: "Liberation Sans", sans-serif;
  font-size: 46px;
  display: flex;
  align-items: center;
  justify-content: center;
}

.step-1 {
  left: 2217px;
  top: 542px;
}

.step-2 {
  left: 2451px;
  top: 871px;
}
```
